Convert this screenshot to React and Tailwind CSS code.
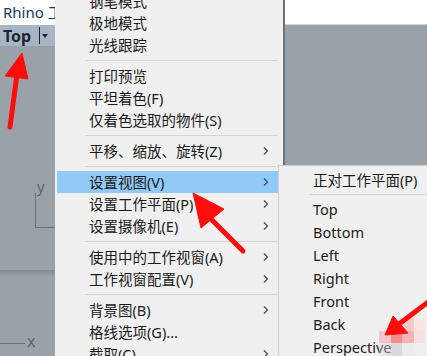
import React from 'react';

const mainItems = [
  { label: '钢笔模式' },
  { label: '极地模式' },
  { label: '光线跟踪' },
  { sep: true },
  { label: '打印预览' },
  { label: '平坦着色(F)' },
  { label: '仅着色选取的物件(S)' },
  { sep: true },
  { label: '平移、缩放、旋转(Z)', sub: true },
  { sep: true },
  { label: '设置视图(V)', sub: true, active: true },
  { label: '设置工作平面(P)', sub: true },
  { label: '设置摄像机(E)', sub: true },
  { sep: true },
  { label: '使用中的工作视窗(A)', sub: true },
  { label: '工作视窗配置(V)', sub: true },
  { sep: true },
  { label: '背景图(B)', sub: true },
  { label: '格线选项(G)...' },
  { label: '截取(C)', sub: true },
];

const viewItems = ['Top', 'Bottom', 'Left', 'Right', 'Front', 'Back', 'Perspective'];

const font = { fontFamily: '"Noto Sans", "Noto Sans CJK SC", sans-serif' };

function Chevron() {
  return (
    <svg width="6" height="10" viewBox="0 0 6 10" className="shrink-0">
      <path d="M1 1.5 L4.5 5 L1 8.5" fill="none" stroke="#4a4a4a" strokeWidth="1.2" />
    </svg>
  );
}

function MenuRow({ item }) {
  if (item.sep) {
    return (
      <div className="h-[9px] flex items-center pl-[28px]">
        <div className="h-px w-full bg-[#d5d5d5]" />
      </div>
    );
  }
  return (
    <div
      className={`h-[22px] flex items-center justify-between pl-[32px] pr-[9px] ${
        item.active ? 'bg-[#91c9f7]' : ''
      }`}
    >
      <span className="whitespace-nowrap leading-none">{item.label}</span>
      {item.sub && <Chevron />}
    </div>
  );
}

function LeftViewport() {
  return (
    <div className="w-[55px] shrink-0 flex flex-col overflow-hidden">
      <div className="h-[25px] bg-white flex items-center pl-[3px] whitespace-nowrap text-[15px] text-[#23395a]">
        Rhino 工作视窗
      </div>
      <div className="h-[21px] bg-[#a9b5c4] flex items-center pl-[3px]">
        <span className="text-[16px] font-bold text-[#1c2633] leading-none">Top</span>
        <div className="ml-[8px] w-px h-[17px] bg-[#1c2633]" />
        <svg width="6" height="4" viewBox="0 0 6 4" className="ml-[2px]">
          <path d="M0 0 H6 L3 4 Z" fill="#1c2633" />
        </svg>
      </div>
      <div className="h-[224px] bg-[#9ba1a9] relative">
        <span className="absolute left-[37px] top-[133px] text-[15px] text-[#5e6369] leading-none">y</span>
        <div className="absolute left-[35px] top-[147px] w-px h-[35px] bg-[#6e7379]" />
        <div className="absolute left-[35px] top-[181px] w-[20px] h-px bg-[#6e7379]" />
      </div>
      <div className="flex-1 bg-[linear-gradient(#868b93,#9ba1a9_6px)] relative">
        <div className="absolute left-0 top-[73px] w-[25px] h-px bg-[#6e7379]" />
        <span className="absolute left-[27px] top-[63px] text-[16px] text-[#5e6369] leading-none">x</span>
      </div>
    </div>
  );
}

function MainMenu() {
  return (
    <div className="w-[228px] shrink-0 bg-[#f0f0f0] overflow-hidden text-[14.5px] text-[#1b1b1b] pl-[2px] pr-[5px]">
      <div className="-mt-[10px]">
        {mainItems.map((item, i) => (
          <MenuRow key={i} item={item} />
        ))}
      </div>
    </div>
  );
}

function ViewSubmenu() {
  return (
    <div className="flex-1 -ml-[5px] bg-[#f0f0f0] border-l border-t border-[#cfcfcf] pt-[3px] text-[14.5px] text-[#1b1b1b] overflow-hidden">
      <div className="h-[23px] flex items-center pl-[34px] whitespace-nowrap">正对工作平面(P)</div>
      <div className="h-[6px] pl-[30px] pt-[2px]">
        <div className="h-px bg-[#d5d5d5]" />
      </div>
      {viewItems.map((v) => (
        <div key={v} className="h-[23px] flex items-center pl-[34px] whitespace-nowrap">
          {v}
        </div>
      ))}
    </div>
  );
}

function Annotations() {
  return (
    <svg className="absolute inset-0 pointer-events-none" width="427" height="356" viewBox="0 0 427 356">
      <g fill="#ff0d0d" stroke="#ff0d0d">
        <line x1="10" y1="127" x2="17" y2="74" strokeWidth="5" strokeLinecap="round" />
        <polygon points="22,53 5,76 28,79" strokeWidth="1" />
        <line x1="243" y1="251" x2="208" y2="216" strokeWidth="5" strokeLinecap="round" />
        <polygon points="193,193 201,228 224,209" strokeWidth="1" />
        <line x1="432" y1="299" x2="399" y2="324" strokeWidth="5" strokeLinecap="round" />
        <polygon points="385,335 393,316 408,333" strokeWidth="1" />
      </g>
    </svg>
  );
}

function Mosaic() {
  return (
    <div className="absolute left-[379px] top-[318px] w-[46px] h-[38px] pointer-events-none grid grid-cols-4 grid-rows-3">
      <div />
      <div className="bg-[#f7d0d0]/70" />
      <div className="bg-[#f9c9c9]" />
      <div className="bg-[#fbe4e4]" />
      <div className="bg-[#f7b9b9]/80" />
      <div className="bg-[#f08c8c]" />
      <div className="bg-[#f5b3b3]" />
      <div className="bg-[#f3e3e3]" />
      <div className="bg-[#d8d8d8]/40" />
      <div className="bg-[#c9c9c9]/60" />
      <div className="bg-[#ececec]" />
      <div />
    </div>
  );
}

export default function App() {
  return (
    <div className="relative w-[427px] h-[356px] overflow-hidden flex bg-[#f0f0f0]" style={font}>
      <LeftViewport />
      <MainMenu />
      <div className="flex-1 flex flex-col min-w-0">
        <div className="border-l-2 border-[#6f7378]">
          <div className="h-[25px] bg-white border-b border-[#d4d4d4]" />
          <div className="h-[140px] bg-[#9aa1a9]" />
        </div>
        <ViewSubmenu />
      </div>
      <Mosaic />
      <Annotations />
    </div>
  );
}
